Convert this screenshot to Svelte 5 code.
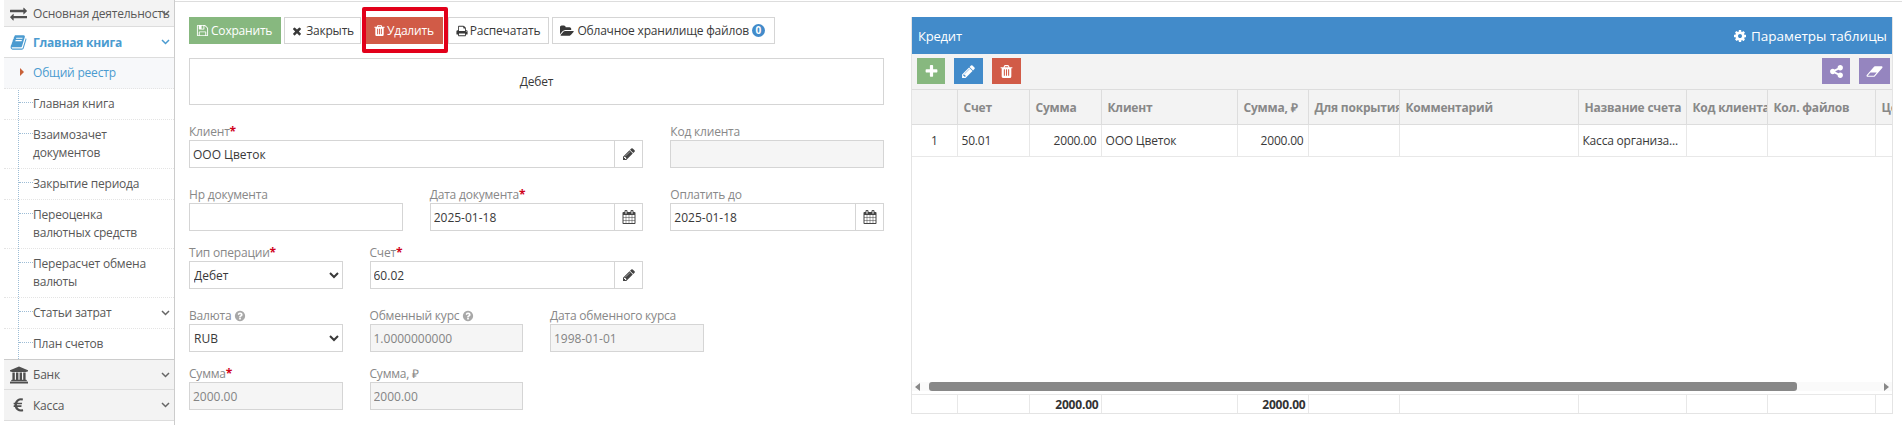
<script>
  const icons = {
    plus: 'M1600 736v192q0 40-28 68t-68 28h-416v416q0 40-28 68t-68 28h-192q-40 0-68-28t-28-68v-416h-416q-40 0-68-28t-28-68v-192q0-40 28-68t68-28h416v-416q0-40 28-68t68-28h192q40 0 68 28t28 68v416h416q40 0 68 28t28 68z',
    pencil: 'M491 1536l91-91-235-235-91 91v107h128v128h107zm523-928q0-22-22-22-10 0-17 7l-542 542q-7 7-7 17 0 22 22 22 10 0 17-7l542-542q7-7 7-17zm-54-192l416 416-832 832h-416v-416zm683 96q0 53-37 90l-166 166-416-416 166-165q36-38 90-38 53 0 91 38l235 234q37 39 37 91z',
    trash: 'M704 1376v-704q0-14-9-23t-23-9h-64q-14 0-23 9t-9 23v704q0 14 9 23t23 9h64q14 0 23-9t9-23zm256 0v-704q0-14-9-23t-23-9h-64q-14 0-23 9t-9 23v704q0 14 9 23t23 9h64q14 0 23-9t9-23zm256 0v-704q0-14-9-23t-23-9h-64q-14 0-23 9t-9 23v704q0 14 9 23t23 9h64q14 0 23-9t9-23zm-544-992h448l-48-117q-7-9-17-11h-317q-10 2-17 11zm928 32v64q0 14-9 23t-23 9h-96v948q0 83-47 143.500t-113 60.500h-832q-66 0-113-58.500t-47-141.500v-952h-96q-14 0-23-9t-9-23v-64q0-14 9-23t23-9h309l70-167q15-37 54-63t79-26h320q40 0 79 26t54 63l70 167h309q14 0 23 9t9 23z',
    times: 'M1490 1322q0 40-28 68l-136 136q-28 28-68 28t-68-28l-294-294-294 294q-28 28-68 28t-68-28l-136-136q-28-28-28-68t28-68l294-294-294-294q-28-28-28-68t28-68l136-136q28-28 68-28t68 28l294 294 294-294q28-28 68-28t68 28l136 136q28 28 28 68t-28 68l-294 294 294 294q28 28 28 68z',
    save: 'M512 1536h768v-384h-768v384zm896 0h128v-896q0-14-10-38.500t-20-34.500l-281-281q-10-10-34-20t-39-10v416q0 40-28 68t-68 28h-576q-40 0-68-28t-28-68v-416h-128v1280h128v-416q0-40 28-68t68-28h832q40 0 68 28t28 68v416zm-384-928v-320q0-13-9.500-22.500t-22.500-9.500h-192q-13 0-22.500 9.500t-9.500 22.500v320q0 13 9.500 22.500t22.500 9.500h192q13 0 22.500-9.500t9.500-22.500zm640 32v928q0 40-28 68t-68 28h-1344q-40 0-68-28t-28-68v-1344q0-40 28-68t68-28h928q40 0 88 20t76 48l280 280q28 28 48 76t20 88z',
    print: 'M448 1536h896v-256h-896v256zm0-640h896v-384h-160q-40 0-68-28t-28-68v-160h-640v640zm1152 64q0-26-19-45t-45-19-45 19-19 45 19 45 45 19 45-19 19-45zm128 0v416q0 13-9.500 22.500t-22.500 9.500h-224v160q0 40-28 68t-68 28h-960q-40 0-68-28t-28-68v-160h-224q-13 0-22.500-9.500t-9.500-22.500v-416q0-79 56.500-135.500t135.500-56.500h64v-544q0-40 28-68t68-28h672q40 0 88 20t76 48l152 152q28 28 48 76t20 88v256h64q79 0 135.500 56.500t56.500 135.500z',
    folder: 'M1879 952q0 31-31 66l-336 396q-43 51-120.500 86.500t-143.500 35.500h-1088q-34 0-60.500-13t-26.500-43q0-31 31-66l336-396q43-51 120.500-86.500t143.500-35.500h1088q34 0 60.500 13t26.500 43zm-343-344v160h-832q-94 0-197 47.500t-164 119.500l-337 396-5 6q0-4-.5-12.500t-.5-12.500v-960q0-92 66-158t158-66h320q92 0 158 66t66 158v32h544q92 0 158 66t66 158z',
    calendar: 'M192 1664h288v-288h-288v288zm352 0h320v-288h-320v288zm-352-352h288v-320h-288v320zm352 0h320v-320h-320v320zm-352-384h288v-288h-288v288zm736 736h320v-288h-320v288zm-384-736h320v-288h-320v288zm768 736h288v-288h-288v288zm-384-352h320v-320h-320v320zm-352-864v-288q0-13-9.500-22.500t-22.500-9.500h-64q-13 0-22.500 9.500t-9.500 22.500v288q0 13 9.500 22.500t22.500 9.500h64q13 0 22.500-9.500t9.500-22.500zm736 864h288v-320h-288v320zm-384-384h320v-288h-320v288zm384 0h288v-288h-288v288zm32-480v-288q0-13-9.500-22.500t-22.500-9.500h-64q-13 0-22.500 9.500t-9.500 22.500v288q0 13 9.500 22.500t22.500 9.500h64q13 0 22.500-9.500t9.500-22.500zm384-64v1280q0 52-38 90t-90 38h-1408q-52 0-90-38t-38-90v-1280q0-52 38-90t90-38h128v-96q0-66 47-113t113-47h64q66 0 113 47t47 113v96h384v-96q0-66 47-113t113-47h64q66 0 113 47t47 113v96h128q52 0 90 38t38 90z',
    cog: 'M1152 896q0-106-75-181t-181-75-181 75-75 181 75 181 181 75 181-75 75-181zm512-109v222q0 12-8 23t-20 13l-185 28q-19 54-39 91 35 50 107 138 10 12 10 25t-9 23q-27 37-99 108t-94 71q-12 0-26-9l-138-108q-44 23-91 38-16 136-29 186-7 28-36 28h-222q-14 0-24.500-8.500t-11.500-21.500l-28-184q-49-16-90-37l-141 107q-10 9-25 9-14 0-25-11-126-114-165-168-7-10-7-23 0-12 8-23 15-21 51-66.500t54-70.500q-27-50-41-99l-183-27q-13-2-21-12.500t-8-23.500v-222q0-12 8-23t19-13l186-28q14-46 39-92-40-57-107-138-10-12-10-24 0-10 9-23 26-36 98.500-107.500t94.500-71.500q13 0 26 10l138 107q44-23 91-38 16-136 29-186 7-28 36-28h222q14 0 24.500 8.500t11.500 21.500l28 184q49 16 90 37l142-107q9-9 24-9 13 0 25 10 129 119 165 170 7 8 7 22 0 12-8 23-15 21-51 66.500t-54 70.500q26 50 41 98l183 28q13 2 21 12.500t8 23.500z',
    share: 'M1344 1024q133 0 226.500 93.500t93.500 226.500-93.500 226.500-226.500 93.500-226.500-93.500-93.500-226.500q0-12 2-34l-360-180q-92 86-218 86-133 0-226.500-93.500t-93.500-226.500 93.500-226.500 226.500-93.500q126 0 218 86l360-180q-2-22-2-34 0-133 93.500-226.500t226.500-93.500 226.500 93.500 93.500 226.500-93.500 226.500-226.500 93.500q-126 0-218-86l-360 180q2 22 2 34t-2 34l360 180q92-86 218-86z',
    eraser: 'M960 1408l336-384h-768l-336 384h768zm1013-1077q15 34 9.500 71.500t-30.500 65.500l-896 1024q-38 44-96 44h-768q-38 0-69.500-20.500t-47.500-54.500q-15-34-9.500-71.500t30.500-65.500l896-1024q38-44 96-44h768q38 0 70 20.500t47 54.500z',
    help: 'M1024 1376v-192q0-14-9-23t-23-9h-192q-14 0-23 9t-9 23v192q0 14 9 23t23 9h192q14 0 23-9t9-23zm256-672q0-88-55.500-163t-138.500-116-170-41q-243 0-371 213-15 24 8 42l132 100q7 6 19 6 16 0 25-12 53-68 86-92 34-24 86-24 48 0 85.500 26t37.500 59q0 38-20 61t-68 45q-63 28-115.500 86.500t-52.500 125.500v36q0 14 9 23t23 9h192q14 0 23-9t9-23q0-19 21.500-49.500t54.500-49.500q32-18 49-28.500t46-35 44.500-48 28-60.500 12.500-81zm384 192q0 209-103 385.500t-279.500 279.500-385.500 103-385.500-103-279.500-279.500-103-385.500 103-385.500 279.500-279.500 385.500-103 385.500 103 279.500 279.500 103 385.500z',
    exchange: 'M1792 1184v192q0 13-9.500 22.500t-22.500 9.500h-1376v192q0 13-9.500 22.500t-22.500 9.500q-12 0-24-10l-319-320q-9-9-9-22 0-14 9-23l320-320q9-9 23-9 13 0 22.500 9.500t9.500 22.500v192h1376q13 0 22.500 9.500t9.500 22.500zm0-544q0 14-9 23l-320 320q-9 9-23 9-13 0-22.500-9.500t-9.500-22.500v-192h-1376q-13 0-22.500-9.500t-9.500-22.500v-192q0-13 9.500-22.500t22.500-9.500h1376v-192q0-14 9-23t23-9q12 0 24 10l319 319q9 9 9 23z',
    bank: 'M960 0l960 384v128h-128q0 26-20.500 45t-48.500 19h-1526q-28 0-48.500-19t-20.500-45h-128v-128zm-704 640h256v768h128v-768h256v768h128v-768h256v768h128v-768h256v768h59q28 0 48.500 19t20.500 45v64h-1664v-64q0-26 20.500-45t48.500-19h59v-768zm1595 960q28 0 48.500 19t20.500 45v128h-1920v-128q0-26 20.500-45t48.500-19h1782z',
    euro: 'M1360 1307l35 159q3 12-3 22.500t-17 14.500l-5 1q-4 2-10.500 3.500t-16 4.500-21.500 5.500-25.500 5-30 5-33.500 4.500-36.500 3-38.500 1q-234 0-409-130.500t-238-351.500h-95q-13 0-22.500-9.500t-9.500-22.500v-113q0-13 9.500-22.500t22.500-9.500h66q-2-57 1-105h-67q-14 0-23-9t-9-23v-114q0-14 9-23t23-9h98q67-210 243.500-338t400.500-128q102 0 194 23 11 3 20 15 6 11 3 24l-43 159q-3 13-14 19.500t-24 2.500l-4-1q-4-1-11.500-2.500l-17.500-3.500-22.500-3.500-26-3-29-2.500-29.500-1q-126 0-226 64t-150 176h468q16 0 25 12 10 12 7 26l-24 114q-5 26-32 26h-488q-3 47 0 105h459q15 0 25 12 9 12 6 27l-24 112q-2 11-11 18.500t-20 7.500h-387q48 117 149.500 185.500t228.500 68.500q18 0 36-1.500t33.500-3.500 29.500-4.500 24.500-5 18.500-4.500l12-3 5-2q13-5 26 2 12 7 15 21z',
    book: 'M1703 478q40 57 18 129l-275 906q-19 64-76.500 107.500t-122.500 43.500h-923q-77 0-148.500-53.500t-99.500-131.500q-24-67-2-127 0-4 3-27t4-37q1-8-3-21.500t-3-19.500q2-11 8-21t16.500-23.500 16.500-23.500q23-38 45-91.500t30-91.500q3-10 .5-30t-.5-28q3-11 17-28t17-23q21-36 42-92t25-90q1-9-2.500-32t.5-28q4-13 22-30.500t22-22.500q19-26 42.500-84.500t27.500-96.500q1-8-3-25.500t-2-26.500q2-8 9-18t18-23 17-21q8-12 16.500-30.500t15-35 16-36 19.500-32 26.500-23.500 36-11.500 47.500 5.500l-1 3q38-9 51-9h761q74 0 114 56t18 130l-274 906q-36 119-71.500 153.500t-128.500 34.500h-869q-27 0-38 15-11 16-1 43 24 70 144 70h923q29 0 56-15.500t35-41.500l300-987q7-22 5-57 38 15 59 43zm-1064 2q-4 13 2 22.500t20 9.500h608q13 0 25.500-9.500t16.500-22.500l21-64q4-13-2-22.500t-20-9.500h-608q-13 0-25.500 9.500t-16.500 22.500zm-83 256q-4 13 2 22.500t20 9.500h608q13 0 25.500-9.500t16.500-22.500l21-64q4-13-2-22.500t-20-9.500h-608q-13 0-25.500 9.500t-16.500 22.500z'
  };

  const subItems = [
    { text: 'Общий реестр', active: true },
    { text: 'Главная книга' },
    { text: 'Взаимозачет документов', tall: true },
    { text: 'Закрытие периода' },
    { text: 'Переоценка валютных средств', tall: true },
    { text: 'Перерасчет обмена валюты', tall: true },
    { text: 'Статьи затрат', caret: true },
    { text: 'План счетов' }
  ];

  const columns = [
    { title: '', w: 45 },
    { title: 'Счет', w: 72 },
    { title: 'Сумма', w: 72 },
    { title: 'Клиент', w: 136 },
    { title: 'Сумма, ₽', w: 71 },
    { title: 'Для покрытия', w: 91 },
    { title: 'Комментарий', w: 179 },
    { title: 'Название счета', w: 108 },
    { title: 'Код клиента', w: 81 },
    { title: 'Кол. файлов', w: 108 },
    { title: 'Цена', w: 60 }
  ];
</script>

{#snippet icon(name, size = 13, viewBox = '0 0 1792 1792')}
  <svg class="icon" width={size} height={size} {viewBox} fill="currentColor"><path d={icons[name]} /></svg>
{/snippet}

{#snippet caret()}
  <svg class="caret" width="9" height="6" viewBox="0 0 9 6" fill="none" stroke="currentColor" stroke-width="1.5"><path d="M1 1l3.500 3.500L8 1" /></svg>
{/snippet}

{#snippet pick(name)}
  <span class="addon">{@render icon(name, 14)}</span>
{/snippet}

<div class="page">
  <aside class="sidebar">
    <div class="top-item first">
      <span class="top-icon">{@render icon('exchange', 17)}</span>
      <span class="clip">Основная деятельность</span>
      <span class="top-caret">{@render caret()}</span>
    </div>
    <div class="open-item">
      <span class="top-icon book">{@render icon('book', 17)}</span>
      <span>Главная книга</span>
      <span class="top-caret">{@render caret()}</span>
    </div>
    <ul class="submenu">
      {#each subItems as item}
        <li class:active={item.active} class:tall={item.tall}>
          <span class="sub-text">{item.text}</span>
          {#if item.caret}<span class="top-caret">{@render caret()}</span>{/if}
        </li>
      {/each}
    </ul>
    <div class="top-item short">
      <span class="top-icon">{@render icon('bank', 18, '0 0 1920 1792')}</span>
      <span>Банк</span>
      <span class="top-caret">{@render caret()}</span>
    </div>
    <div class="top-item">
      <span class="top-icon">{@render icon('euro', 17)}</span>
      <span>Касса</span>
      <span class="top-caret">{@render caret()}</span>
    </div>
  </aside>

  <main class="main">
    <section class="form-side">
      <div class="actions">
        <button class="btn save">{@render icon('save', 13)} Сохранить</button>
        <button class="btn close">{@render icon('times', 12)} Закрыть</button>
        <span class="marked"><button class="btn remove">{@render icon('trash', 13)} Удалить</button></span>
        <button class="btn print">{@render icon('print', 12)} Распечатать</button>
        <button class="btn files">{@render icon('folder', 14, '0 0 1920 1792')} Облачное хранилище файлов <span class="badge">0</span></button>
      </div>

      <div class="doc-type">Дебет</div>

      <div class="row first-row">
        <div class="field s8">
          <label>Клиент<b>*</b></label>
          <div class="group"><input value="ООО Цветок" />{@render pick('pencil')}</div>
        </div>
        <div class="field s4">
          <label>Код клиента</label>
          <input disabled value="" />
        </div>
      </div>

      <div class="row wide">
        <div class="field s4">
          <label>Нр документа</label>
          <input value="" />
        </div>
        <div class="field s4">
          <label>Дата документа<b>*</b></label>
          <div class="group"><input value="2025-01-18" />{@render pick('calendar')}</div>
        </div>
        <div class="field s4">
          <label>Оплатить до</label>
          <div class="group"><input value="2025-01-18" />{@render pick('calendar')}</div>
        </div>
      </div>

      <div class="row">
        <div class="field s3">
          <label>Тип операции<b>*</b></label>
          <select><option>Дебет</option></select>
        </div>
        <div class="field s5">
          <label>Счет<b>*</b></label>
          <div class="group"><input value="60.02" />{@render pick('pencil')}</div>
        </div>
      </div>

      <div class="row wide">
        <div class="field s3">
          <label>Валюта <span class="help">{@render icon('help', 12)}</span></label>
          <select><option>RUB</option></select>
        </div>
        <div class="field s3">
          <label>Обменный курс <span class="help">{@render icon('help', 12)}</span></label>
          <input disabled value="1.0000000000" />
        </div>
        <div class="field s3">
          <label>Дата обменного курса</label>
          <input disabled value="1998-01-01" />
        </div>
      </div>

      <div class="row">
        <div class="field s3">
          <label>Сумма<b>*</b></label>
          <input disabled value="2000.00" />
        </div>
        <div class="field s3">
          <label>Сумма, ₽</label>
          <input disabled value="2000.00" />
        </div>
      </div>
    </section>

    <section class="grid-side">
      <header class="caption">
        <span>Кредит</span>
        <span class="params">{@render icon('cog', 14)} Параметры таблицы</span>
      </header>

      <div class="toolbar">
        <button class="tool green">{@render icon('plus', 15)}</button>
        <button class="tool blue">{@render icon('pencil', 15)}</button>
        <button class="tool red">{@render icon('trash', 15)}</button>
        <span class="spacer"></span>
        <button class="tool purple">{@render icon('share', 15)}</button>
        <button class="tool purple wider">{@render icon('eraser', 17, '0 0 2048 1792')}</button>
      </div>

      <div class="table-wrap">
        <table>
          <colgroup>
            {#each columns as col}<col style="width: {col.w}px" />{/each}
          </colgroup>
          <thead>
            <tr>
              {#each columns as col}<th>{col.title}</th>{/each}
            </tr>
          </thead>
          <tbody>
            <tr>
              <td class="center">1</td>
              <td>50.01</td>
              <td class="num">2000.00</td>
              <td>ООО Цветок</td>
              <td class="num">2000.00</td>
              <td></td>
              <td></td>
              <td>Касса организа...</td>
              <td></td>
              <td></td>
              <td></td>
            </tr>
          </tbody>
        </table>
      </div>

      <div class="scrollbar">
        <span class="arrow left"></span>
        <span class="track"><span class="thumb"></span></span>
        <span class="arrow right"></span>
      </div>

      <div class="table-foot">
        <table>
          <colgroup>
            {#each columns as col}<col style="width: {col.w}px" />{/each}
          </colgroup>
          <tbody>
            <tr>
              <td></td>
              <td></td>
              <td class="num">2000.00</td>
              <td></td>
              <td class="num">2000.00</td>
              <td></td>
              <td></td>
              <td></td>
              <td></td>
              <td></td>
              <td></td>
            </tr>
          </tbody>
        </table>
      </div>
    </section>
  </main>
</div>

<style>
  :global(body) {
    margin: 0;
    background: #fff;
  }

  .page {
    display: flex;
    height: 425px;
    overflow: hidden;
    font-family: "Open Sans", sans-serif;
    font-size: 12px;
    letter-spacing: -0.2px;
    color: #393939;
  }

  .icon {
    display: inline-block;
    vertical-align: -2px;
    flex: none;
  }

  .sidebar {
    width: 170px;
    margin-left: 4px;
    flex: none;
    border-right: 1px solid #ccc;
    color: #585858;
  }

  .top-item,
  .open-item {
    display: flex;
    align-items: center;
    height: 30px;
    background: #f3f3f3;
    border-bottom: 1px solid #ddd;
    white-space: nowrap;
    position: relative;
  }

  .top-item.first {
    height: 26px;
  }

  .top-item.short {
    height: 29px;
  }

  .open-item {
    background: #fff;
    color: #4b9bd0;
    font-weight: 700;
  }

  .top-icon {
    width: 29px;
    flex: none;
    display: flex;
    justify-content: center;
    color: #4f4f4f;
  }

  .top-icon.book {
    color: #4b9bd0;
  }

  .clip {
    overflow: hidden;
  }

  .top-caret {
    position: absolute;
    right: 4px;
    top: 50%;
    margin-top: -3px;
    color: #666;
    line-height: 0;
  }

  .open-item .top-caret {
    color: #4b9bd0;
  }

  .caret {
    display: block;
  }

  .submenu {
    list-style: none;
    margin: 0;
    padding: 0;
    position: relative;
    border-bottom: 1px solid #ccc;
  }

  .submenu::before {
    content: "";
    position: absolute;
    left: 14px;
    top: 0;
    bottom: 0;
    border-left: 1px dotted #9dbdd6;
  }

  .submenu li {
    display: flex;
    align-items: center;
    position: relative;
    height: 30px;
    border-bottom: 1px dotted #e4e4e4;
    padding-left: 29px;
    padding-right: 12px;
    line-height: 18px;
  }

  .submenu li:last-child {
    border-bottom: none;
  }

  .submenu li.tall {
    align-items: flex-start;
    padding-top: 6px;
    height: 42px;
  }

  .submenu li::before {
    content: "";
    position: absolute;
    left: 15px;
    top: 13px;
    width: 14px;
    border-top: 1px dotted #9dbdd6;
  }

  .submenu li.active {
    background: #f7f8fa;
    color: #4b9bd0;
  }

  .submenu li.active::before {
    left: 16px;
    width: 0;
    top: 10px;
    border-top: 4px solid transparent;
    border-bottom: 4px solid transparent;
    border-left: 4px solid #c86139;
  }

  .main {
    flex: 1;
    min-width: 0;
    display: grid;
    grid-template-columns: 695px 982px;
    column-gap: 27px;
    align-items: start;
    padding: 15px 9px 0 14px;
    border-top: 1px solid #ddd;
    margin-top: 1px;
    height: 409px;
  }

  .actions {
    display: flex;
    gap: 3px;
    height: 27px;
  }

  .btn {
    font: inherit;
    letter-spacing: inherit;
    height: 27px;
    box-sizing: border-box;
    padding: 0 7px;
    border: 1px solid #d5d5d5;
    background: #fff;
    color: #393939;
    white-space: nowrap;
    display: inline-flex;
    align-items: center;
    gap: 3px;
    margin: 0;
  }

  .save {
    background: #87b87f;
    border-color: #87b87f;
    color: #fff;
    gap: 2px;
    padding: 0 8px 0 6px;
  }

  .close {
    padding: 0 6px;
  }

  .remove {
    background: #d15b47;
    border-color: #d15b47;
    color: #fff;
    gap: 1px;
    padding: 0 8px 0 6px;
  }

  .print {
    gap: 2px;
    padding: 0 8px 0 7px;
  }

  .files {
    padding: 0 9px 0 7px;
  }

  .marked {
    position: relative;
    margin: 0 2px 0 2px;
  }

  .marked::after {
    content: "";
    position: absolute;
    left: -4px;
    right: -5px;
    top: -10px;
    bottom: -9px;
    border: 4px solid #e2001a;
    border-radius: 2px;
    pointer-events: none;
  }

  .badge {
    display: inline-block;
    min-width: 13px;
    height: 13px;
    border-radius: 7px;
    background: #428bca;
    color: #fff;
    font-size: 10px;
    font-weight: 700;
    line-height: 13px;
    text-align: center;
  }

  .doc-type {
    margin-top: 14px;
    height: 47px;
    box-sizing: border-box;
    border: 1px solid #d5d5d5;
    display: flex;
    align-items: center;
    justify-content: center;
  }

  .row {
    display: grid;
    grid-template-columns: repeat(12, 1fr);
    column-gap: 27px;
    margin-top: 12px;
  }

  .row.first-row {
    margin-top: 17px;
  }

  .row.wide {
    margin-top: 17px;
  }

  .field {
    min-width: 0;
    display: flex;
    flex-direction: column;
  }

  .s3 { grid-column: span 3; }
  .s4 { grid-column: span 4; }
  .s5 { grid-column: span 5; }
  .s8 { grid-column: span 8; }

  label {
    height: 18px;
    line-height: 19px;
    color: #888;
    white-space: nowrap;
  }

  label b {
    color: #d0021b;
    font-weight: 700;
  }

  .help {
    color: #a8a8a8;
  }

  input,
  select {
    font: inherit;
    height: 28px;
    width: 100%;
    min-width: 0;
    box-sizing: border-box;
    border: 1px solid #d5d5d5;
    border-radius: 0;
    padding: 0 3px;
    color: #393939;
    background: #fff;
    margin: 0;
    outline: none;
  }

  select {
    padding: 0;
  }

  input:disabled {
    background: #f5f5f5;
    color: #848484;
    opacity: 1;
  }

  .group {
    display: flex;
  }

  .addon {
    width: 28px;
    height: 28px;
    flex: none;
    box-sizing: border-box;
    border: 1px solid #d5d5d5;
    border-left: none;
    display: flex;
    align-items: center;
    justify-content: center;
    color: #444;
  }

  .grid-side {
    height: 397px;
    display: flex;
    flex-direction: column;
    box-sizing: border-box;
    border-left: 1px solid #e4e4e4;
    border-right: 1px solid #e4e4e4;
    border-bottom: 1px solid #e4e4e4;
  }

  .caption {
    height: 37px;
    flex: none;
    background: #428bca;
    color: #fff;
    font-size: 13px;
    display: flex;
    align-items: center;
    justify-content: space-between;
    padding: 0 5px 0 6px;
  }

  .params {
    font-size: 13.5px;
    letter-spacing: 0;
  }

  .toolbar {
    height: 35px;
    flex: none;
    box-sizing: border-box;
    background: #f3f3f3;
    display: flex;
    align-items: flex-start;
    gap: 9px;
    padding: 4px 2px 0 5px;
  }

  .spacer {
    flex: 1;
  }

  .tool {
    width: 29px;
    height: 26px;
    border: none;
    padding: 0;
    color: #fff;
    display: flex;
    align-items: center;
    justify-content: center;
  }

  .tool.green,
  .tool.purple {
    width: 28px;
  }

  .tool.wider {
    width: 31px;
  }

  .green { background: #87b87f; }
  .blue { background: #428bca; }
  .red { background: #d15b47; }
  .purple { background: #9585bf; }

  .table-wrap {
    flex: 1;
    min-height: 0;
    overflow: hidden;
  }

  table {
    border-collapse: collapse;
    table-layout: fixed;
    width: 1023px;
  }

  th {
    height: 35px;
    box-sizing: border-box;
    background: #f3f3f3;
    border-top: 1px solid #ddd;
    border-right: 1px solid #ddd;
    border-bottom: 1px solid #ddd;
    color: #888;
    font-weight: 700;
    text-align: left;
    padding: 0 6px;
    white-space: nowrap;
    overflow: hidden;
  }

  td {
    height: 32px;
    box-sizing: border-box;
    border-right: 1px solid #e8e8e8;
    border-bottom: 1px solid #e8e8e8;
    padding: 0 4px;
    white-space: nowrap;
    overflow: hidden;
  }

  .num {
    text-align: right;
  }

  .center {
    text-align: center;
  }

  .scrollbar {
    height: 9px;
    flex: none;
    display: flex;
    align-items: center;
    margin-bottom: 3px;
    padding: 0 3px;
    background: #fafafa;
  }

  .arrow {
    width: 0;
    height: 0;
    flex: none;
    border-top: 4px solid transparent;
    border-bottom: 4px solid transparent;
  }

  .arrow.left {
    border-right: 5px solid #888;
  }

  .arrow.right {
    border-left: 5px solid #888;
  }

  .track {
    flex: 1;
    height: 9px;
    padding: 0 8px 0 9px;
  }

  .thumb {
    display: block;
    height: 9px;
    width: 868px;
    background: #888;
    border-radius: 3px;
  }

  .table-foot {
    flex: none;
    overflow: hidden;
    border-top: 1px solid #e8e8e8;
  }

  .table-foot td {
    height: 18px;
    border-bottom: none;
    font-weight: 700;
    color: #333;
    font-size: 12px;
    padding: 0 2px;
  }
</style>
